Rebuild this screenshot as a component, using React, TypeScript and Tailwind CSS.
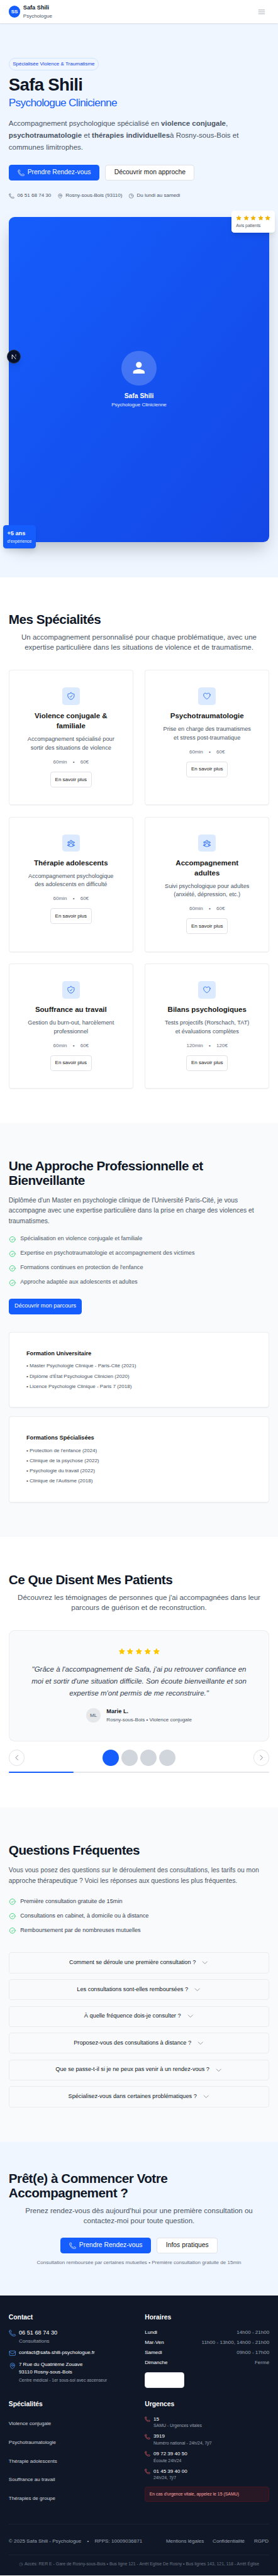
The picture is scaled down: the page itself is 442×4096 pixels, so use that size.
import type { ReactNode } from "react";
import type { IconType } from "react-icons";
import {
  HiOutlineBars3,
  HiOutlineCheckCircle,
  HiOutlineChevronDown,
  HiOutlineChevronLeft,
  HiOutlineChevronRight,
  HiOutlineClock,
  HiOutlineEnvelope,
  HiOutlineHeart,
  HiOutlineMapPin,
  HiOutlinePhone,
  HiOutlineShieldCheck,
  HiOutlineUserGroup,
  HiStar,
} from "react-icons/hi2";

type Speciality = {
  icon: IconType;
  title: ReactNode;
  text: ReactNode;
  duration: string;
  price: string;
};

const specialities: Speciality[] = [
  {
    icon: HiOutlineShieldCheck,
    title: <>Violence conjugale &amp;<br />familiale</>,
    text: <>Accompagnement spécialisé pour<br />sortir des situations de violence</>,
    duration: "60min",
    price: "60€",
  },
  {
    icon: HiOutlineHeart,
    title: "Psychotraumatologie",
    text: <>Prise en charge des traumatismes<br />et stress post-traumatique</>,
    duration: "60min",
    price: "60€",
  },
  {
    icon: HiOutlineUserGroup,
    title: "Thérapie adolescents",
    text: <>Accompagnement psychologique<br />des adolescents en difficulté</>,
    duration: "60min",
    price: "60€",
  },
  {
    icon: HiOutlineUserGroup,
    title: <>Accompagnement<br />adultes</>,
    text: <>Suivi psychologique pour adultes<br />(anxiété, dépression, etc.)</>,
    duration: "60min",
    price: "60€",
  },
  {
    icon: HiOutlineShieldCheck,
    title: "Souffrance au travail",
    text: <>Gestion du burn-out, harcèlement<br />professionnel</>,
    duration: "60min",
    price: "60€",
  },
  {
    icon: HiOutlineHeart,
    title: "Bilans psychologiques",
    text: <>Tests projectifs (Rorschach, TAT)<br />et évaluations complètes</>,
    duration: "120min",
    price: "120€",
  },
];

const strengths = [
  "Spécialisation en violence conjugale et familiale",
  "Expertise en psychotraumatologie et accompagnement des victimes",
  "Formations continues en protection de l'enfance",
  "Approche adaptée aux adolescents et adultes",
];

const trainings = [
  {
    title: "Formation Universitaire",
    items: [
      "Master Psychologie Clinique - Paris-Cité (2021)",
      "Diplôme d'État Psychologue Clinicien (2020)",
      "Licence Psychologie Clinique - Paris 7 (2018)",
    ],
  },
  {
    title: "Formations Spécialisées",
    items: [
      "Protection de l'enfance (2024)",
      "Clinique de la psychose (2022)",
      "Psychologie du travail (2022)",
      "Clinique de l'Autisme (2018)",
    ],
  },
];

const faqPoints = [
  "Première consultation gratuite de 15min",
  "Consultations en cabinet, à domicile ou à distance",
  "Remboursement par de nombreuses mutuelles",
];

const questions = [
  "Comment se déroule une première consultation ?",
  "Les consultations sont-elles remboursées ?",
  "À quelle fréquence dois-je consulter ?",
  "Proposez-vous des consultations à distance ?",
  "Que se passe-t-il si je ne peux pas venir à un rendez-vous ?",
  "Spécialisez-vous dans certaines problématiques ?",
];

const hours = [
  ["Lundi", "14h00 - 21h00"],
  ["Mar-Ven", "11h00 - 13h00, 14h00 - 21h00"],
  ["Samedi", "09h00 - 17h00"],
  ["Dimanche", "Fermé"],
];

const footerLinks = [
  "Violence conjugale",
  "Psychotraumatologie",
  "Thérapie adolescents",
  "Souffrance au travail",
  "Thérapies de groupe",
];

const emergencies = [
  ["15", "SAMU - Urgences vitales"],
  ["3919", "Numéro national - 24h/24, 7j/7"],
  ["09 72 39 40 50", "Écoute 24h/24"],
  ["01 45 39 40 00", "24h/24, 7j/7"],
];

function SectionTitle({ children }: { children: ReactNode }) {
  return <h2 className="text-4xl font-bold tracking-tight text-gray-900">{children}</h2>;
}

function PrimaryCta() {
  return (
    <button className="flex h-11 items-center rounded-lg bg-blue-600 px-6 text-lg text-white">
      <HiOutlinePhone className="mr-2 size-5" />
      Prendre Rendez-vous
    </button>
  );
}

function OutlineCta({ children }: { children: ReactNode }) {
  return (
    <button className="flex h-11 items-center rounded-lg border border-gray-300/70 bg-white px-[23.26px] text-lg text-[#171717]">
      {children}
    </button>
  );
}

function Stars({ className }: { className: string }) {
  return (
    <div className="flex gap-1">
      {[0, 1, 2, 3, 4].map((n) => (
        <HiStar key={n} className={className} />
      ))}
    </div>
  );
}

function CheckItem({ children, className }: { children: ReactNode; className: string }) {
  return (
    <li className="flex items-center gap-3">
      <HiOutlineCheckCircle className="size-5 text-green-500" />
      <span className={className}>{children}</span>
    </li>
  );
}

function Header() {
  return (
    <header className="relative z-10 flex h-16 items-center justify-between bg-white px-6 shadow-sm">
      <div className="flex items-center gap-2">
        <div className="flex size-8 items-center justify-center rounded-full bg-blue-600 text-sm font-bold text-white">
          SS
        </div>
        <div className="flex flex-col">
          <span className="text-base font-semibold text-gray-900">Safa Shili</span>
          <span className="text-sm text-gray-600">Psychologue</span>
        </div>
      </div>
      <button className="p-2.5 text-gray-400">
        <HiOutlineBars3 className="size-6" />
      </button>
    </header>
  );
}

function FrameworkBadge() {
  return (
    <div className="absolute top-[368px] -left-[5px] flex size-[38px] items-center justify-center rounded-full border border-[#303540] bg-[#07112b] shadow-lg">
      <svg viewBox="0 0 14 14" className="size-[15px]" fill="none">
        <defs>
          <linearGradient id="fade" x1="0" y1="0" x2="0" y2="1">
            <stop offset="0" stopColor="#fff" />
            <stop offset="1" stopColor="#fff" stopOpacity="0.05" />
          </linearGradient>
        </defs>
        <path d="M2 13V1.5L11.8 13.2" stroke="#fff" strokeWidth="1.6" />
        <rect x="10.6" y="1" width="1.5" height="8" fill="url(#fade)" />
      </svg>
    </div>
  );
}

function Hero() {
  return (
    <section className="bg-blue-50 px-6 py-24">
      <div className="flex">
        <span className="rounded-full border border-blue-200/70 px-[9.26px] py-[5.26px] text-sm font-medium text-blue-700">
          Spécialisée Violence &amp; Traumatisme
        </span>
      </div>
      <h1 className="mt-[11.5px] text-5xl leading-[60px] font-bold tracking-tight text-gray-900">
        Safa Shili
        <span className="block text-3xl font-normal text-blue-600">Psychologue Clinicienne</span>
      </h1>
      <p className="mt-6 text-xl leading-relaxed text-gray-600">
        Accompagnement psychologique spécialisé en <strong>violence conjugale</strong>,<br />
        <strong>psychotraumatologie</strong> et <strong>thérapies individuelles</strong>à Rosny-sous-Bois et
        <br />
        communes limitrophes.
      </p>
      <div className="mt-8 flex gap-4">
        <PrimaryCta />
        <OutlineCta>Découvrir mon approche</OutlineCta>
      </div>
      <div className="mt-8 flex gap-4 text-sm text-gray-600">
        <span className="flex items-center gap-2"><HiOutlinePhone className="size-4" />06 51 68 74 30</span>
        <span className="flex items-center gap-2"><HiOutlineMapPin className="size-4" />Rosny-sous-Bois (93110)</span>
        <span className="flex items-center gap-2"><HiOutlineClock className="size-4" />Du lundi au samedi</span>
      </div>
      <div className="relative mt-12 flex h-[900px] flex-col items-center justify-center rounded-2xl bg-linear-to-br from-blue-600 to-blue-700 text-white shadow-2xl">
        <div className="mb-4 flex size-24 items-center justify-center rounded-full bg-white/20">
          <svg viewBox="0 0 24 24" className="size-12" fill="currentColor">
            <path d="M12 12c2.21 0 4-1.79 4-4s-1.79-4-4-4-4 1.79-4 4 1.79 4 4 4zm0 2c-2.67 0-8 1.34-8 4v2h16v-2c0-2.66-5.33-4-8-4z" />
          </svg>
        </div>
        <p className="text-lg font-semibold">Safa Shili</p>
        <p className="text-sm text-white/90">Psychologue Clinicienne</p>
        <div className="absolute -top-4 -right-4 rounded-lg bg-white p-3 shadow-lg">
          <Stars className="size-4 text-yellow-500" />
          <p className="mt-1 text-xs text-gray-600">Avis patients</p>
        </div>
        <div className="absolute -bottom-4 -left-4 rounded-lg bg-blue-600 p-3 shadow-lg">
          <p className="text-base font-bold">+5 ans</p>
          <p className="text-xs text-white/90">d'expérience</p>
        </div>
        <FrameworkBadge />
      </div>
    </section>
  );
}

function Specialities() {
  return (
    <section className="bg-white px-6 py-24">
      <SectionTitle>Mes Spécialités</SectionTitle>
      <p className="mt-4 text-center text-xl text-gray-600">
        Un accompagnement personnalisé pour chaque problématique, avec une
        <br />
        expertise particulière dans les situations de violence et de traumatisme.
      </p>
      <div className="mt-12 grid grid-cols-2 gap-8">
        {specialities.map(({ icon: Icon, title, text, duration, price }, i) => (
          <article
            key={i}
            className="flex flex-col items-center rounded-lg border border-gray-200/70 bg-white py-[47.26px] text-center shadow-xs"
          >
            <div className="flex size-12 items-center justify-center rounded-lg bg-blue-100 text-blue-600">
              <Icon className="size-6" />
            </div>
            <h3 className="mt-4 text-xl font-semibold text-[#171717]">{title}</h3>
            <p className="mt-3 text-base text-gray-600">{text}</p>
            <div className="mt-4 flex gap-4 text-sm text-gray-500">
              <span>{duration}</span>
              <span>•</span>
              <span>{price}</span>
            </div>
            <button className="mt-4 h-11 rounded-lg border border-gray-300/70 bg-white px-[11.26px] text-sm text-[#171717]">
              En savoir plus
            </button>
          </article>
        ))}
      </div>
    </section>
  );
}

function Approach() {
  return (
    <section className="bg-gray-50 px-6 py-24">
      <SectionTitle>
        Une Approche Professionnelle et
        <br />
        Bienveillante
      </SectionTitle>
      <p className="mt-6 text-lg leading-7 text-gray-600">
        Diplômée d'un Master en psychologie clinique de l'Université Paris-Cité, je vous
        <br />
        accompagne avec une expertise particulière dans la prise en charge des violences et
        <br />
        traumatismes.
      </p>
      <ul className="mt-6 flex flex-col gap-4">
        {strengths.map((item) => (
          <CheckItem key={item} className="text-gray-600">{item}</CheckItem>
        ))}
      </ul>
      <button className="mt-8 flex h-11 items-center rounded-lg bg-blue-600 px-4 text-base text-white">
        Découvrir mon parcours
      </button>
      <div className="mt-12 flex flex-col gap-6">
        {trainings.map(({ title, items }) => (
          <article key={title} className="rounded-lg border border-gray-200/70 bg-white p-[47.26px] shadow-xs">
            <h3 className="font-semibold text-[#171717]">{title}</h3>
            <ul className="mt-3 flex flex-col gap-2 text-sm text-gray-600">
              {items.map((item) => (
                <li key={item}>• {item}</li>
              ))}
            </ul>
          </article>
        ))}
      </div>
    </section>
  );
}

function Testimonials() {
  return (
    <section className="bg-white px-6 py-24">
      <SectionTitle>Ce Que Disent Mes Patients</SectionTitle>
      <p className="mt-4 text-center text-xl text-gray-600">
        Découvrez les témoignages de personnes que j'ai accompagnées dans leur
        <br />
        parcours de guérison et de reconstruction.
      </p>
      <figure className="mt-12 flex flex-col items-center rounded-2xl border border-gray-200/70 bg-gray-50 py-[47.26px]">
        <Stars className="size-5 text-yellow-400" />
        <blockquote className="mt-6 text-center text-xl leading-relaxed text-gray-700 italic">
          "Grâce à l'accompagnement de Safa, j'ai pu retrouver confiance en
          <br />
          moi et sortir d'une situation difficile. Son écoute bienveillante et son
          <br />
          expertise m'ont permis de me reconstruire."
        </blockquote>
        <figcaption className="mt-6 flex items-center gap-4">
          <div className="flex size-10 items-center justify-center rounded-full bg-gray-200 text-sm text-gray-600">
            ML
          </div>
          <div>
            <p className="font-semibold text-gray-900">Marie L.</p>
            <p className="text-sm text-gray-600">Rosny-sous-Bois • Violence conjugale</p>
          </div>
        </figcaption>
      </figure>
      <div className="mt-6 flex items-center justify-between">
        <button className="flex size-11 items-center justify-center rounded-full border border-gray-300/70 text-gray-600">
          <HiOutlineChevronLeft className="size-5" />
        </button>
        <div className="flex gap-2">
          <span className="size-11 rounded-full bg-blue-600" />
          <span className="size-11 rounded-full bg-gray-300" />
          <span className="size-11 rounded-full bg-gray-300" />
          <span className="size-11 rounded-full bg-gray-300" />
        </div>
        <button className="flex size-11 items-center justify-center rounded-full border border-gray-300/70 text-gray-600">
          <HiOutlineChevronRight className="size-5" />
        </button>
      </div>
      <div className="mt-4 h-1 rounded-full bg-gray-200">
        <div className="h-1 w-1/4 rounded-full bg-blue-600" />
      </div>
    </section>
  );
}

function Faq() {
  return (
    <section className="bg-gray-50 px-6 py-24">
      <SectionTitle>Questions Fréquentes</SectionTitle>
      <p className="mt-6 text-lg leading-7 text-gray-600">
        Vous vous posez des questions sur le déroulement des consultations, les tarifs ou mon
        <br />
        approche thérapeutique ? Voici les réponses aux questions les plus fréquentes.
      </p>
      <ul className="mt-8 flex flex-col gap-4">
        {faqPoints.map((item) => (
          <CheckItem key={item} className="text-gray-700">{item}</CheckItem>
        ))}
      </ul>
      <div className="mt-12 flex flex-col gap-4">
        {questions.map((question) => (
          <button
            key={question}
            className="flex h-[58px] items-center justify-center gap-4 rounded-lg border border-gray-200/80 text-base text-gray-900"
          >
            {question}
            <HiOutlineChevronDown className="size-5 text-gray-500" />
          </button>
        ))}
      </div>
    </section>
  );
}

function CallToAction() {
  return (
    <section className="bg-blue-50 px-6 py-20">
      <SectionTitle>
        Prêt(e) à Commencer Votre
        <br />
        Accompagnement ?
      </SectionTitle>
      <p className="mt-4 text-center text-xl text-gray-600">
        Prenez rendez-vous dès aujourd'hui pour une première consultation ou
        <br />
        contactez-moi pour toute question.
      </p>
      <div className="mt-8 flex justify-center gap-4">
        <PrimaryCta />
        <OutlineCta>Infos pratiques</OutlineCta>
      </div>
      <p className="mt-4 text-center text-sm text-gray-500">
        Consultation remboursée par certaines mutuelles • Première consultation gratuite de 15min
      </p>
    </section>
  );
}

function Footer() {
  return (
    <footer className="bg-gray-900 px-6 pt-12 pb-6 text-sm text-white">
      <div className="grid grid-cols-2 gap-8">
        <div>
          <h3 className="text-lg font-semibold">Contact</h3>
          <div className="mt-4 flex flex-col gap-3">
            <div className="flex items-start gap-2">
              <HiOutlinePhone className="mt-0.5 size-5 text-blue-400" />
              <div>
                <p className="text-base">06 51 68 74 30</p>
                <p className="text-gray-400">Consultations</p>
              </div>
            </div>
            <div className="flex items-start gap-2">
              <HiOutlineEnvelope className="mt-0.5 size-5 text-blue-400" />
              <p>contact@safa-shili-psychologue.fr</p>
            </div>
            <div className="flex items-start gap-2">
              <HiOutlineMapPin className="mt-0.5 size-5 text-blue-400" />
              <div>
                <p>7 Rue du Quatrième Zouave</p>
                <p>93110 Rosny-sous-Bois</p>
                <p className="mt-1 text-xs text-gray-400">Centre médical - 1er sous-sol avec ascenseur</p>
              </div>
            </div>
          </div>
        </div>
        <div>
          <h3 className="text-lg font-semibold">Horaires</h3>
          <div className="mt-4 flex flex-col gap-2">
            {hours.map(([day, time]) => (
              <div key={day} className="flex justify-between">
                <span>{day}</span>
                <span className="text-gray-400">{time}</span>
              </div>
            ))}
          </div>
          <div className="mt-4 h-11 w-[109px] rounded-lg border border-gray-300/70 bg-white" />
        </div>
        <div>
          <h3 className="text-lg font-semibold">Spécialités</h3>
          <ul className="mt-4 flex flex-col gap-2 text-gray-300">
            {footerLinks.map((link) => (
              <li key={link} className="flex h-11 items-center">{link}</li>
            ))}
          </ul>
        </div>
        <div>
          <h3 className="text-lg font-semibold">Urgences</h3>
          <ul className="mt-4 flex flex-col gap-3">
            {emergencies.map(([phone, label]) => (
              <li key={phone} className="flex items-start gap-2">
                <HiOutlinePhone className="mt-0.5 size-4 text-red-400" />
                <div>
                  <p>{phone}</p>
                  <p className="text-xs text-gray-400">{label}</p>
                </div>
              </li>
            ))}
          </ul>
          <p className="mt-4 rounded-lg border border-[#55151f]/70 bg-[#281825] p-[11.26px] text-xs text-red-300">
            En cas d'urgence vitale, appelez le 15 (SAMU)
          </p>
        </div>
      </div>
      <div className="mt-12 flex items-center justify-between border-t border-gray-800/70 pt-[23.26px] text-gray-400">
        <div className="flex gap-4">
          <span>© 2025 Safa Shili - Psychologue</span>
          <span>•</span>
          <span>RPPS: 10009036871</span>
        </div>
        <div className="flex gap-6">
          <a className="flex h-11 items-center">Mentions légales</a>
          <a className="flex h-11 items-center">Confidentialité</a>
          <a className="flex h-11 min-w-11 items-center justify-center">RGPD</a>
        </div>
      </div>
      <div className="mt-4 flex items-center justify-center gap-1 border-t border-gray-800/70 pt-[15.26px] text-xs text-gray-500">
        <HiOutlineClock className="mt-0.5 size-3" />
        Accès: RER E - Gare de Rosny-sous-Bois • Bus ligne 121 - Arrêt Eglise De Rosny • Bus lignes 143, 121, 118 -
        Arrêt Église
      </div>
    </footer>
  );
}

export default function App() {
  return (
    <div className="overflow-hidden font-['Liberation_Sans',Arial,sans-serif] whitespace-nowrap [zoom:0.5754]">
      <Header />
      <main>
        <Hero />
        <Specialities />
        <Approach />
        <Testimonials />
        <Faq />
        <CallToAction />
      </main>
      <Footer />
    </div>
  );
}
